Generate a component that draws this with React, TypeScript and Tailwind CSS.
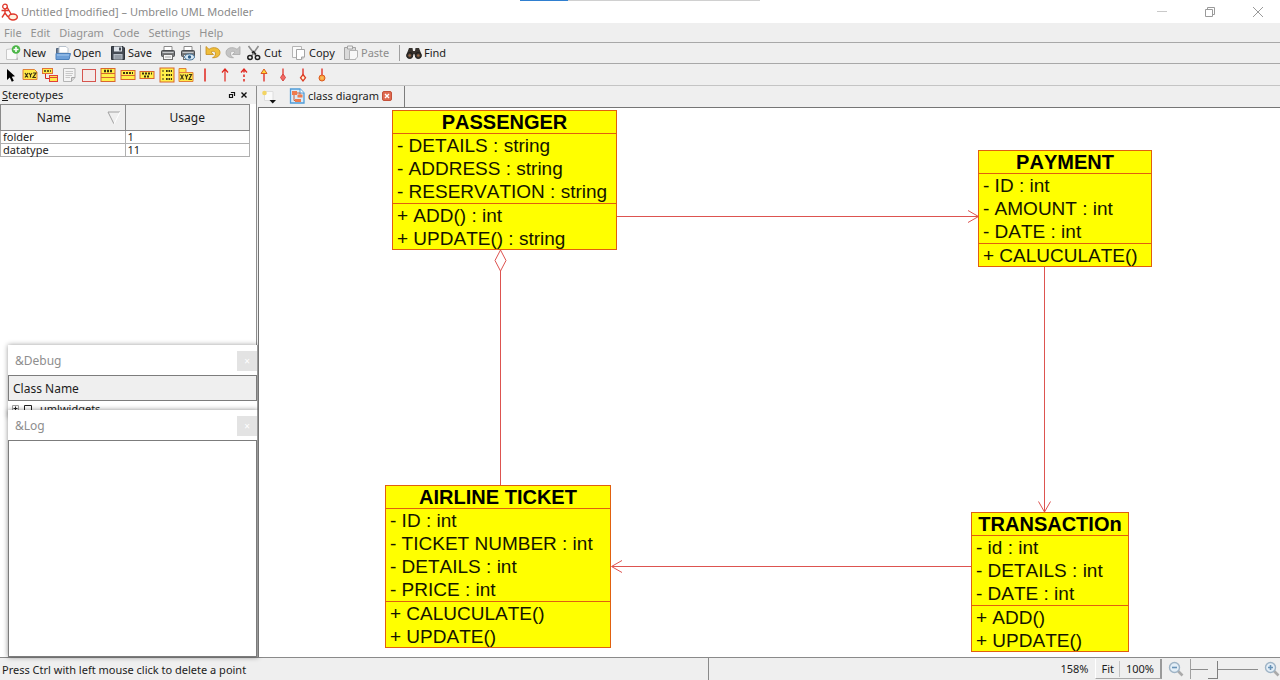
import type { ReactNode } from 'react';

type ClassNode = {
  name: string;
  place: string;
  attributes: string[];
  operations: string[];
};

const nodes: ClassNode[] = [
  {
    name: 'PASSENGER',
    place: 'left-[133px] top-[2px] w-[225px]',
    attributes: ['- DETAILS : string', '- ADDRESS : string', '- RESERVATION : string'],
    operations: ['+ ADD() : int', '+ UPDATE() : string'],
  },
  {
    name: 'PAYMENT',
    place: 'left-[719px] top-[42px] w-[174px]',
    attributes: ['- ID : int', '- AMOUNT : int', '- DATE : int'],
    operations: ['+ CALUCULATE()'],
  },
  {
    name: 'AIRLINE TICKET',
    place: 'left-[126px] top-[377px] w-[226px]',
    attributes: ['- ID : int', '- TICKET NUMBER : int', '- DETAILS : int', '- PRICE : int'],
    operations: ['+ CALUCULATE()', '+ UPDATE()'],
  },
  {
    name: 'TRANSACTIOn',
    place: 'left-[712px] top-[404px] w-[158px]',
    attributes: ['- id : int', '- DETAILS : int', '- DATE : int'],
    operations: ['+ ADD()', '+ UPDATE()'],
  },
];

const stereotypes = [
  { name: 'folder', usage: 1 },
  { name: 'datatype', usage: 11 },
];

function Icon({ children, w = 16, h = 16 }: { children: ReactNode; w?: number; h?: number }) {
  return (
    <svg width={w} height={h} viewBox={`0 0 ${w} ${h}`} fill="none" className="shrink-0" aria-hidden="true">
      {children}
    </svg>
  );
}

function ToolButton({ label, icon, className = '', muted = false }: { label: string; icon: ReactNode; className?: string; muted?: boolean }) {
  return (
    <button type="button" className={`flex shrink-0 items-center gap-[2px] whitespace-nowrap ${muted ? 'text-[#8c8c8c]' : 'text-[#1c1c1c]'} ${className}`}>
      {icon}
      <span>{label}</span>
    </button>
  );
}

function IconButton({ label, children }: { label: string; children: ReactNode }) {
  return (
    <button type="button" aria-label={label} title={label} className="flex shrink-0 items-center justify-center">
      {children}
    </button>
  );
}

const NewIcon = (
  <Icon>
    <path d="M1.500 4.500 L12 3 V14.500 H1.500 Z" fill="#fafafa" stroke="#c9c9c9" />
    <path d="M10 15 L13 12 V15 Z" fill="#bdbdbd" />
    <circle cx="11" cy="4.500" r="4.300" fill="#4cb648" />
    <path d="M11 2 V7 M8.500 4.500 H13.500" stroke="#fff" strokeWidth="1.600" />
  </Icon>
);
const OpenIcon = (
  <Icon>
    <path d="M1.500 13 V3.500 H6 L7.500 5 H12 V13 Z" fill="#6d7f96" stroke="#53657c" />
    <path d="M4 8 V1.500 H11 L13 3.500 V8 Z" fill="#fff" stroke="#b8c2cd" />
    <path d="M1 8.500 H15.500 L14 14.500 H1 Z" fill="#6ea0d8" stroke="#4d80ba" />
    <path d="M2 10 H14" stroke="#a8caee" />
  </Icon>
);
const SaveIcon = (
  <Icon>
    <path d="M1.500 1.500 H13 L14.500 3 V14.500 H1.500 Z" fill="#454b54" stroke="#2f343b" />
    <rect x="4" y="1.500" width="8" height="5" fill="#dfe4ea" />
    <rect x="9" y="2.500" width="2" height="3" fill="#454b54" />
    <rect x="3.500" y="9" width="9" height="5.500" fill="#b9c0c8" />
    <path d="M4.500 11 H11.500 M4.500 13 H11.500" stroke="#737b85" />
  </Icon>
);
function PrintIcon({ preview = false }: { preview?: boolean }) {
  return (
    <Icon>
      <path d="M4 6 V1.500 H12 V6" fill="#fff" stroke="#8a8a8a" />
      <rect x="1.500" y="5.500" width="13" height="6" rx="1" fill="#77797c" stroke="#4b4d50" />
      <path d="M2.500 7.500 H13.500" stroke="#c8cacc" />
      <rect x="3.500" y="9.500" width="9" height="5" fill="#f6f6f6" stroke="#6e6e6e" />
      {preview ? (
        <>
          <ellipse cx="9.500" cy="12" rx="5" ry="3" fill="#d9e9f5" stroke="#48779d" />
          <circle cx="9.500" cy="12" r="1.700" fill="#2e5f8a" />
        </>
      ) : (
        <path d="M5 12 H11" stroke="#a9a9a9" />
      )}
    </Icon>
  );
}
function TurnIcon({ redo = false }: { redo?: boolean }) {
  return (
    <Icon>
      <g transform={redo ? 'matrix(-1 0 0 1 16 0)' : undefined}>
        <path
          d="M1 1.500 V9.500 H8.500 L6 7.200 C8 5.500 11 6.500 10.500 9 C10.300 11 9 12 7.500 12.700 C12 13 15 11 15 7.500 C15 3 8.500 1 4 4.300 Z"
          fill={redo ? '#c4c4c4' : '#efbd3a'}
          stroke={redo ? '#a9a9a9' : '#c48c1c'}
          strokeWidth="0.800"
        />
      </g>
    </Icon>
  );
}
const CutIcon = (
  <Icon>
    <path d="M2.500 1 L10 11 M12.500 1 L5.500 11" stroke="#8b8b8b" strokeWidth="1.600" />
    <path d="M6 8 L7.500 6.500 L10 9.500" stroke="#222" strokeWidth="1.500" />
    <ellipse cx="4" cy="12.500" rx="2.200" ry="2" stroke="#1d1d1d" strokeWidth="1.500" />
    <ellipse cx="11.500" cy="12.500" rx="2.200" ry="2" stroke="#1d1d1d" strokeWidth="1.500" />
  </Icon>
);
const CopyIcon = (
  <Icon>
    <path d="M1.500 1.500 H10.500 V12.500 H1.500 Z" fill="#fafafa" stroke="#b4b4b4" />
    <path d="M5.500 4.500 H13.500 V12 L10.500 14.500 H5.500 Z" fill="#fff" stroke="#a4a4a4" />
    <path d="M10.500 14.500 V12 H13.500" fill="#d5d5d5" stroke="#a4a4a4" />
  </Icon>
);
const PasteIcon = (
  <Icon>
    <path d="M1.500 2.500 H12.500 V14.500 H1.500 Z" fill="#dadada" stroke="#a3a3a3" />
    <path d="M4.500 1 H9.500 V4 H4.500 Z" fill="#efefef" stroke="#a3a3a3" />
    <path d="M6.500 5.500 H14.500 V12 L12 14.500 H6.500 Z" fill="#f7f7f7" stroke="#b4b4b4" />
  </Icon>
);
const FindIcon = (
  <Icon>
    <path d="M3 3 H6.500 L7 6 H9 L9.500 3 H13 L15.300 9 V12 H9.500 V9.500 H6.500 V12 H0.700 V9 Z" fill="#37322e" />
    <circle cx="3.700" cy="10.500" r="3" fill="#3c3734" stroke="#1c1a18" />
    <circle cx="12.300" cy="10.500" r="3" fill="#3c3734" stroke="#1c1a18" />
    <circle cx="3.700" cy="10.500" r="1.300" fill="#9a6a48" />
    <circle cx="12.300" cy="10.500" r="1.300" fill="#9a6a48" />
  </Icon>
);

const smudge = '#3d3412';
const diagramTools: { label: string; art: ReactNode }[] = [
  {
    label: 'Select',
    art: <path d="M4 2 V13 L6.800 10.600 L8.800 14.800 L10.800 13.800 L8.800 9.800 L12 9.300 Z" fill="#000" />,
  },
  {
    label: 'Object',
    art: (
      <>
        <path d="M1 2.500 H12.500 L15 5 V12.500 H1 Z" fill="#ffe94a" stroke="#e0813a" />
        <path d="M3 6 L6 10.500 M6 6 L3 10.500 M7 6 L8.500 8 L10 6 M8.500 8 V10.500 M11 6 H14 L11 10.500 H14" stroke={smudge} strokeWidth="1.200" />
      </>
    ),
  },
  {
    label: 'Message',
    art: (
      <>
        <rect x="0.500" y="1.500" width="10" height="5" fill="#ffe94a" stroke="#e0713a" />
        <path d="M2 4 H9" stroke={smudge} strokeDasharray="2 1" strokeWidth="1.500" />
        <path d="M3.500 7 V11.500 H7" stroke="#d42a20" />
        <rect x="7.500" y="8.500" width="8" height="6" fill="#ffe94a" stroke="#e0413a" />
        <path d="M8 10.500 H15" stroke="#e0413a" />
      </>
    ),
  },
  {
    label: 'Note',
    art: (
      <>
        <path d="M2.500 1.500 H14 V10.500 L10.500 14.500 H2.500 Z" fill="#f4f4f4" stroke="#b4b4b4" />
        <path d="M4.500 4.500 H12 M4.500 6.500 H12 M4.500 8.500 H11 M4.500 10.500 H9" stroke="#c8c8c8" />
        <path d="M10.500 14.500 V10.500 H14" fill="#d6d6d6" stroke="#a8a8a8" />
      </>
    ),
  },
  { label: 'Box', art: <rect x="1.500" y="2.500" width="13" height="12" fill="#f4e9e8" stroke="#d6544e" /> },
  {
    label: 'Class',
    art: (
      <>
        <rect x="1" y="1.500" width="14" height="13" fill="#fff04a" stroke="#d8672e" />
        <path d="M1 6.500 H15 M1 10.500 H15" stroke="#d8672e" />
        <path d="M4 4 H12" stroke={smudge} strokeWidth="2.400" strokeDasharray="2 1" />
      </>
    ),
  },
  {
    label: 'Interface',
    art: (
      <>
        <rect x="1" y="3.500" width="14" height="9" fill="#fff04a" stroke="#d8672e" />
        <path d="M1 8.500 H15" stroke="#d8672e" />
        <path d="M3 6 H13" stroke={smudge} strokeWidth="2.200" strokeDasharray="2 1" />
      </>
    ),
  },
  {
    label: 'Datatype',
    art: (
      <>
        <rect x="1" y="4.500" width="14" height="7" fill="#fff04a" stroke="#d8672e" />
        <path d="M3 6.500 H13 M5 9.500 H11" stroke={smudge} strokeWidth="2" strokeDasharray="2 1" />
      </>
    ),
  },
  {
    label: 'Enum',
    art: (
      <>
        <rect x="1" y="1" width="14" height="14" fill="#fff04a" stroke="#d8672e" />
        <path d="M7 4 H13 M7 8 H13 M7 12 H13" stroke={smudge} strokeWidth="2.200" strokeDasharray="1.700 0.800" />
        <path d="M3 4 H5 M3 8 H5 M3 12 H5" stroke={smudge} />
      </>
    ),
  },
  {
    label: 'Package',
    art: (
      <>
        <path d="M1 1.500 H8 V5.500 H15 V14.500 H1 Z" fill="#ffe94a" stroke="#e0813a" />
        <path d="M1 5.500 H8" stroke="#e0813a" />
        <path d="M2.500 7.500 L5.500 12.500 M5.500 7.500 L2.500 12.500 M7 7.500 L8.500 10 L10 7.500 M8.500 10 V12.500 M11 7.500 H13.500 L11 12.500 H14" stroke={smudge} strokeWidth="1.200" />
      </>
    ),
  },
  { label: 'Association', art: <path d="M8 1.500 V14.500" stroke="#e0251c" strokeWidth="1.500" /> },
  {
    label: 'Directed association',
    art: <path d="M8 2 V14.500 M5 5.500 L8 2 L11 5.500" stroke="#e0251c" strokeWidth="1.200" />,
  },
  {
    label: 'Dependency',
    art: (
      <>
        <path d="M8 3 V14.500" stroke="#e0251c" strokeWidth="1.500" strokeDasharray="2.500 2" />
        <path d="M5 5.500 L8 2 L11 5.500" stroke="#e0251c" strokeWidth="1.200" />
      </>
    ),
  },
  {
    label: 'Generalization',
    art: (
      <>
        <path d="M8 6 V14.500" stroke="#e0251c" strokeWidth="1.300" />
        <path d="M5 6.500 L8 2 L11 6.500 Z" fill="#ffd83a" stroke="#dc5a20" />
      </>
    ),
  },
  {
    label: 'Composition',
    art: (
      <>
        <path d="M8 1.500 V9" stroke="#e0251c" strokeWidth="1.200" />
        <path d="M8 7 L10.500 10.500 L8 14 L5.500 10.500 Z" fill="#f06a66" stroke="#d8443e" />
      </>
    ),
  },
  {
    label: 'Aggregation',
    art: (
      <>
        <path d="M8 1.500 V8" stroke="#e0251c" strokeWidth="1.300" />
        <path d="M8 7.500 L10.500 10.800 L8 14 L5.500 10.800 Z" fill="#fff3d8" stroke="#dc3a20" strokeWidth="1.300" />
      </>
    ),
  },
  {
    label: 'Containment',
    art: (
      <>
        <path d="M8 1.500 V8" stroke="#e0251c" strokeWidth="1.300" />
        <circle cx="8" cy="11" r="3" fill="#f8a23a" stroke="#dc5a20" />
        <path d="M8 9.500 V12.500 M6.500 11 H9.500" stroke="#f9c46a" />
      </>
    ),
  },
];

function Separator() {
  return <span className="h-4 w-px shrink-0 bg-[#a0a0a0]" />;
}

function Connectors() {
  return (
    <svg className="absolute left-0 top-0" width="1021" height="549" fill="none" stroke="#dd5350" aria-hidden="true">
      <path d="M358 108.500 H719 M709 102.500 L719.500 108.500 L709 114.500" />
      <path d="M785.500 158 V404 M779.500 393.500 L785.500 404 L791.500 393.500" />
      <path d="M712 458.500 H353 M363 452.500 L352.500 458.500 L363 464.500" />
      <path d="M241.500 377 V163 M241.500 142 L247 152.500 L241.500 163 L236 152.500 Z" />
    </svg>
  );
}

function ClassBox({ node }: { node: ClassNode }) {
  return (
    <section className={`absolute border border-[#e0600f] bg-[#ffff00] text-[19px] leading-[23px] whitespace-nowrap text-[#141400] [font-kerning:none] ${node.place}`}>
      <h2 className="text-center text-[20px] leading-[22px] font-bold text-black">{node.name}</h2>
      <ul className="border-t border-[#e0600f] px-1">
        {node.attributes.map((line) => (
          <li key={line}>{line}</li>
        ))}
      </ul>
      <ul className="-mb-px border-t border-[#e0600f] px-1">
        {node.operations.map((line) => (
          <li key={line}>{line}</li>
        ))}
      </ul>
    </section>
  );
}

function FloatTitle({ title }: { title: string }) {
  return (
    <header className="flex h-[30px] shrink-0 items-center justify-between bg-white pt-[2px] pl-[7px] text-[12px] text-[#8e8e8e]">
      <h2>{title}</h2>
      <button type="button" aria-label="Close" className="flex h-5 w-5 items-center justify-center bg-[#e3e3e3] text-[10px] text-white">
        ×
      </button>
    </header>
  );
}

function ZoomGlyph({ plus = false }: { plus?: boolean }) {
  return (
    <Icon>
      <path d="M9.500 9.500 L14.500 14.500" stroke="#aaa" strokeWidth="2.600" />
      <circle cx="6.500" cy="6.500" r="5" fill="#e3eef7" stroke="#9fb4c6" strokeWidth="1.400" />
      <path d={plus ? 'M4 6.500 H9 M6.500 4 V9' : 'M4 6.500 H9'} stroke="#6893b8" strokeWidth="1.600" />
    </Icon>
  );
}

export default function App() {
  return (
    <div className="flex h-screen flex-col overflow-hidden bg-[#efefef] font-['Noto_Sans','Open_Sans',sans-serif] text-[11px] leading-4 text-[#1c1c1c]">
      <header className="relative flex h-[23px] shrink-0 items-center bg-white text-[#8a8a8a]">
        <div className="absolute top-0 left-[520px] flex h-px">
          <span className="w-12 bg-[#2f7fd0]" />
          <span className="w-48 bg-[#d0d0d0]" />
        </div>
        <Icon w={20} h={20}>
          <circle cx="5" cy="4.500" r="2.300" stroke="#e0392c" strokeWidth="1.300" />
          <path d="M5 7 V11 L2 15.500 M5 11 L8 15 M1.500 8.500 H8.500 M7 5 L11 12" stroke="#e0392c" strokeWidth="1.400" />
          <ellipse cx="13" cy="15" rx="4.300" ry="2.900" fill="#fff3e0" stroke="#e0392c" strokeWidth="1.500" />
        </Icon>
        <h1 className="pl-px">Untitled [modified] – Umbrello UML Modeller</h1>
        <div className="ml-auto flex items-center gap-9 pr-4">
          <IconButton label="Minimize">
            <Icon w={12} h={12}><path d="M1 5.500 H11" stroke="#c9c9c9" /></Icon>
          </IconButton>
          <IconButton label="Restore">
            <Icon w={12} h={12}><path d="M1.500 3.500 H8.500 V10.500 H1.500 Z M3.500 3 V1.500 H10.500 V8.500 H9" stroke="#9a9a9a" /></Icon>
          </IconButton>
          <IconButton label="Close">
            <Icon w={12} h={12}><path d="M1 1 L11 11 M11 1 L1 11" stroke="#9a9a9a" /></Icon>
          </IconButton>
        </div>
      </header>

      <nav className="flex h-5 shrink-0 items-center gap-[9px] border-b border-[#a8a8a8] pt-px pl-1 text-[#929292]">
        {['File', 'Edit', 'Diagram', 'Code', 'Settings', 'Help'].map((item) => (
          <button type="button" key={item}>{item}</button>
        ))}
      </nav>

      <div className="flex h-[21px] shrink-0 items-center border-b border-[#a8a8a8] pl-[5px]" role="toolbar" aria-label="Main">
        <ToolButton label="New" icon={NewIcon} className="w-[50px]" />
        <ToolButton label="Open" icon={OpenIcon} className="w-[55px]" />
        <ToolButton label="Save" icon={SaveIcon} className="w-[50px]" />
        <div className="flex items-center gap-1 pr-1">
          <IconButton label="Print"><PrintIcon /></IconButton>
          <IconButton label="Print preview"><PrintIcon preview /></IconButton>
        </div>
        <Separator />
        <div className="flex items-center gap-1 pr-[5px] pl-1">
          <IconButton label="Undo"><TurnIcon /></IconButton>
          <IconButton label="Redo"><TurnIcon redo /></IconButton>
        </div>
        <ToolButton label="Cut" icon={CutIcon} className="w-[45px]" />
        <ToolButton label="Copy" icon={CopyIcon} className="w-[52px]" />
        <ToolButton label="Paste" icon={PasteIcon} className="w-[56px]" muted />
        <Separator />
        <ToolButton label="Find" icon={FindIcon} className="pl-[6px]" />
      </div>

      <div className="h-[22px] shrink-0 border-b border-[#c4c4c4] pl-[3px]">
        <div className="flex h-full w-[327px] items-center justify-between" role="toolbar" aria-label="Diagram">
          {diagramTools.map((tool) => (
            <IconButton key={tool.label} label={tool.label}>
              <Icon>{tool.art}</Icon>
            </IconButton>
          ))}
        </div>
      </div>

      <div className="relative flex min-h-0 flex-1">
        <aside className="flex w-[257px] shrink-0 flex-col border-r border-[#8c8c8c]">
          <header className="flex h-[18px] shrink-0 items-center justify-between pr-2 pl-[2px]">
            <h2><u>S</u>tereotypes</h2>
            <div className="flex items-center gap-1">
              <IconButton label="Float">
                <Icon w={8} h={8}><path d="M3.500 2 V1.500 H6.500 V4.500 H6 M1.500 3.500 H4.500 V6.500 H1.500 Z" stroke="#111" strokeWidth="1.200" /></Icon>
              </IconButton>
              <IconButton label="Close panel">
                <Icon w={8} h={8}><path d="M1.500 1.500 L6.500 6.500 M6.500 1.500 L1.500 6.500" stroke="#111" strokeWidth="1.400" /></Icon>
              </IconButton>
            </div>
          </header>
          <div className="flex-1 bg-white pr-[6px]">
            <table className="w-full table-fixed border-collapse">
              <thead>
                <tr className="h-[26px] bg-[#efefef] text-[12px]">
                  <th className="border border-[#8a8a8a] p-0 font-normal">
                    <span className="flex items-center">
                      <span className="flex-1 text-center">Name</span>
                      <Icon w={18} h={14}>
                        <path d="M13 1 H1 L7 13" stroke="#a0a0a0" />
                        <path d="M13 1 L7 13" stroke="#fff" />
                      </Icon>
                    </span>
                  </th>
                  <th className="border border-[#8a8a8a] p-0 font-normal">Usage</th>
                </tr>
              </thead>
              <tbody>
                {stereotypes.map((row) => (
                  <tr key={row.name} className="leading-3">
                    <td className="border border-[#b0b0b0] p-0 pl-[2px]">{row.name}</td>
                    <td className="border border-[#b0b0b0] p-0 pl-[2px]">{row.usage}</td>
                  </tr>
                ))}
              </tbody>
            </table>
          </div>
        </aside>

        <section className="absolute top-[259px] left-2 flex w-[250px] flex-col border-r border-[#9a9a9a] bg-white shadow-[0_0_5px_rgba(0,0,0,0.4)]">
          <FloatTitle title="&Debug" />
          <div className="flex h-[26px] shrink-0 items-center border border-[#7c7c7c] bg-[#efefef] pt-px pl-1 text-[12px]">Class Name</div>
          <div className="flex h-4 shrink-0 items-center gap-1 pl-1">
            <Icon w={20} h={12}>
              <path d="M0.500 2.500 H6.500 V8.500 H0.500 Z" stroke="#a0a0a0" />
              <path d="M1.500 5.500 H5.500 M3.500 3.500 V7.500 M12.500 2.500 H19.500 V10.500 H12.500 Z" stroke="#222" />
            </Icon>
            <span className="pl-1">umlwidgets</span>
          </div>
        </section>
        <section className="absolute top-[324px] bottom-0 left-2 flex w-[250px] flex-col border-r border-[#9a9a9a] bg-white shadow-[0_0_5px_rgba(0,0,0,0.45)]">
          <FloatTitle title="&Log" />
          <div className="flex-1 border border-[#7c7c7c] bg-white" />
        </section>

        <main className="flex min-w-0 flex-1 flex-col pl-px">
          <div className="flex h-[21px] shrink-0 items-center pl-[3px]" role="tablist">
            <IconButton label="New diagram">
              <Icon>
                <path d="M3.500 2.500 H12 V11.500 H3.500 Z" fill="#fafafa" stroke="#dedede" />
                <circle cx="3.500" cy="4" r="2.300" fill="#f3d463" />
                <path d="M8.500 11 H15 L11.700 14.500 Z" fill="#111" />
              </Icon>
            </IconButton>
            <div className="flex h-full items-center border-r border-[#7c7c7c] pr-3 pb-px pl-3">
              <button type="button" role="tab" aria-selected="true" className="flex items-center gap-[3px]">
                <Icon>
                  <path d="M1.500 1 H11 L15 5 V15 H1.500 Z" fill="#d9ebf9" stroke="#4f9cd8" strokeWidth="1.300" />
                  <path d="M11 1 V5 H15" fill="#fff" stroke="#4f9cd8" />
                  <rect x="3" y="3" width="5" height="4" fill="#ef7b4d" />
                  <rect x="8.500" y="6.500" width="5" height="3" fill="#ef7b4d" />
                  <rect x="6" y="11" width="6" height="3" fill="#ef7b4d" />
                  <path d="M5 7 V12.500 H6 M8 5 H11 V6.500" stroke="#c8603c" />
                </Icon>
                <span>class diagram</span>
              </button>
              <button type="button" aria-label="Close tab" className="ml-[3px]">
                <Icon w={10} h={10}>
                  <rect x="0.500" y="0.500" width="9" height="9" rx="1.500" fill="#df6a50" stroke="#c4513a" />
                  <path d="M3 3 L7 7 M7 3 L3 7" stroke="#fff" strokeWidth="1.400" />
                </Icon>
              </button>
            </div>
          </div>
          <div className="relative flex-1 overflow-hidden border-t border-l border-[#757575] bg-white font-['Liberation_Sans',Arial,sans-serif]">
            <Connectors />
            {nodes.map((node) => (
              <ClassBox key={node.name} node={node} />
            ))}
          </div>
        </main>
      </div>

      <footer className="flex h-[23px] shrink-0 items-stretch border-t border-[#8a8a8a]">
        <p className="flex flex-1 items-center pt-px pl-[2px]">Press Ctrl with left mouse click to delete a point</p>
        <div className="flex w-[572px] items-center justify-end border-l border-[#8a8a8a]">
          <output className="pr-[7px]">158%</output>
          <div className="flex h-5 items-center border-r-2 border-b border-l border-r-[#9a9a9a] border-b-[#a8a8a8] border-l-white">
            <button type="button" className="px-[5px]">Fit</button>
            <button type="button" className="border-l border-[#c4c4c4] px-[6px]">100%</button>
          </div>
          <div className="flex items-center gap-[6px] pl-[6px]">
            <IconButton label="Zoom out"><ZoomGlyph /></IconButton>
            <input
              type="range"
              aria-label="Zoom"
              min={0}
              max={100}
              defaultValue={30}
              className="h-5 w-[68px] appearance-none border-l border-[#a0a0a0] bg-transparent [&::-webkit-slider-runnable-track]:h-px [&::-webkit-slider-runnable-track]:bg-[#8c8c8c] [&::-webkit-slider-thumb]:-mt-2 [&::-webkit-slider-thumb]:h-[18px] [&::-webkit-slider-thumb]:w-[10px] [&::-webkit-slider-thumb]:appearance-none [&::-webkit-slider-thumb]:border-r [&::-webkit-slider-thumb]:border-b [&::-webkit-slider-thumb]:border-[#808080] [&::-webkit-slider-thumb]:bg-[#efefef]"
            />
            <IconButton label="Zoom in"><ZoomGlyph plus /></IconButton>
          </div>
        </div>
      </footer>
    </div>
  );
}
